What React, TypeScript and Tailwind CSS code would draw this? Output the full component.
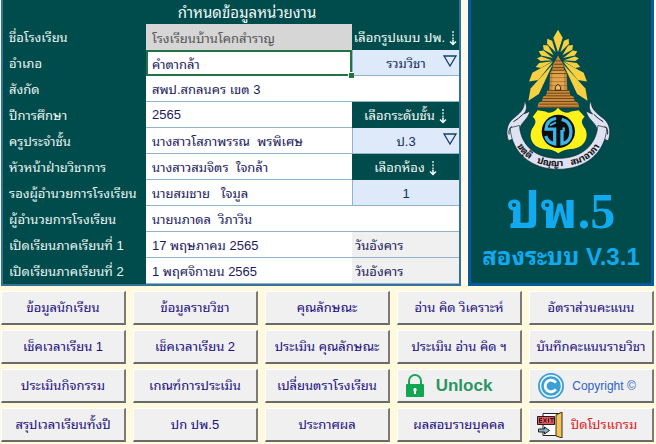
import React from "react";

const LINE = "border-[#8fb4cc]";

function DownArrow() {
  return (
    <svg viewBox="0 0 8 15" className="h-[15px] w-2 shrink-0" fill="none" stroke="currentColor" aria-hidden="true">
      <path d="M4 0v10" strokeWidth="1.3" strokeDasharray="2 1.2" />
      <path d="M4 9v5M1 10.5l3 3 3-3" strokeWidth="1.5" />
    </svg>
  );
}

function Label({ id, children }: { id: string; children: React.ReactNode }) {
  return (
    <label htmlFor={id} className="flex h-[26px] items-center whitespace-nowrap pl-[6px] pt-[2px] text-[#eaf6f4]">
      {children}
    </label>
  );
}

function Field({ id, value, wide }: { id: string; value: string; wide?: boolean }) {
  return (
    <input
      id={id}
      defaultValue={value}
      className={`h-[26px] w-full min-w-0 border-b bg-white px-[6px] text-[#1c1c5c] outline-none ${LINE} ${wide ? "col-span-2" : ""}`}
    />
  );
}

function Picker({ id, value, arrow }: { id: string; value: string; arrow?: boolean }) {
  return (
    <div className={`relative h-[26px] border-b border-l bg-[#deeafa] ${LINE}`}>
      <select
        id={id}
        defaultValue={value}
        className="h-full w-full appearance-none bg-transparent pt-[2px] text-center text-[#12305c] outline-none [text-align-last:center]"
      >
        <option>{value}</option>
      </select>
      {arrow && (
        <svg viewBox="0 0 14 12" className="pointer-events-none absolute right-[2px] top-[5px] h-3 w-[14px]" fill="none" stroke="#12406c" strokeWidth="1.3" aria-hidden="true">
          <path d="M1 1h12L7 11z" />
        </svg>
      )}
    </div>
  );
}

function PickerTitle({ id, children }: { id: string; children: React.ReactNode }) {
  return (
    <label htmlFor={id} className="flex h-[26px] items-center justify-center gap-1 whitespace-nowrap pt-[2px] text-[#f2faf8]">
      {children}
    </label>
  );
}

function Weekday() {
  return <span className={`flex h-[26px] items-center border-b bg-[#f0f0f0] pl-[3px] pt-[2px] text-[#1c1c5c] ${LINE}`}>วันอังคาร</span>;
}

// Left half of the sunburst: tip x, tip y, base x, base y, half width.
const RAYS = [
  [260, 117, 285, 158, 9],
  [247, 136, 279, 167, 9],
  [234, 155, 276, 175, 8],
  [229, 176, 274, 182, 7],
  [225, 202, 275, 185, 8],
  [205, 246, 277, 186, 14],
  [203, 304, 276, 194, 15],
];

function ray([tx, ty, bx, by, w]: number[]) {
  const dx = tx - bx;
  const dy = ty - by;
  const len = Math.hypot(dx, dy);
  const mx = bx + dx * 0.74;
  const my = by + dy * 0.74;
  const nx = (-dy / len) * w;
  const ny = (dx / len) * w;
  return `${tx},${ty} ${mx + nx},${my + ny} ${bx},${by} ${mx - nx},${my - ny}`;
}

function Emblem() {
  const half = RAYS.map((r) => <polygon key={r.join()} points={ray(r)} />);
  return (
    <svg viewBox="136 85 330 430" className="h-[143px] w-[110px]" role="img" aria-label="ตราโรงเรียน">
      <g fill="#f6d042">
        <polygon points="292,90 306,114 292,158 278,114" />
        {half}
        <g transform="translate(584 0) scale(-1 1)">{half}</g>
      </g>
      <path d="M292 168L300 182L308 194L310 210L318 220L320 272H326L329 288L339 292L342 305L352 310L356 324H230L234 310L244 305L247 292L256 288L260 272H266L268 220L275 210L277 194L285 182Z" fill="#c98a3c" />
      <path d="M275 215h35v56h-35z" fill="#e0a64a" />
      <g stroke="#5b3716" strokeWidth="2.5">
        <path d="M284 184h16M277 194h31M275 204h35M274 212h36M268 222h51" />
        <path d="M268 234h52M268 246h52M267 258h53" strokeWidth="1" />
        <path d="M260 273h66M257 281h71M254 289h76M246 297h94M242 306h100M236 314h115M231 323h125" />
      </g>
      <path d="M284 272v-9q8-16 16 0v9z" fill="#f0c060" stroke="#35200e" strokeWidth="3" />
      <g fill="#dfe2f2" stroke="#10282c" strokeWidth="2">
        <path d="M143 424C134 398 138 376 154 360C174 343 192 333 191 303C202 322 197 334 188 344L208 335C201 360 184 366 178 384L174 412Z" />
        <path d="M443 424C452 398 448 376 432 360C412 343 391 333 391 303C382 322 387 334 396 344L376 335C383 360 400 366 408 384L412 412Z" />
        <path d="M148 385C153 462 213 510 293 510S434 462 439 385L412 378C407 437 363 477 293 477S180 437 176 378Z" />
      </g>
      <path d="M145 405q-3-17 9-24M441 405q3-17-9-24M158 367q16-10 28-22M428 367q-16-10-28-22" fill="none" stroke="#10282c" strokeWidth="3" />
      <path id="motto" d="M152 400C169 466 218 501 293 501S419 466 435 400" fill="none" />
      <text fill="#101010" fontSize="28" fontWeight="bold" className="whitespace-pre">
        <textPath href="#motto" startOffset="50%" textAnchor="middle">{"ขตฺติ\u00a0\u00a0 ปญฺญา\u00a0\u00a0 สมาอาภา"}</textPath>
      </text>
      <path d="M292 325C283 338 267 344 254 336L231 332L216 352C230 364 224 375 214 388C200 420 222 449 256 449C273 450 284 455 293 462C302 455 313 450 330 449C364 449 388 420 374 388C364 375 358 364 372 352L354 332L331 336C318 344 301 338 292 325Z" fill="#fff21c" />
      <circle cx="293" cy="396" r="50" fill="#0c0c0c" />
      <g fill="none" stroke="#38b4e6" strokeWidth="10">
        <path d="M286 357Q257 362 256 389H282V433Q261 430 255 410" />
        <path d="M286 369L268 378" strokeWidth="6" />
        <path d="M303 360Q331 366 331 396Q331 428 304 433V392" />
        <path d="M309 384v12" strokeWidth="7" />
      </g>
    </svg>
  );
}

function LockIcon() {
  return (
    <svg viewBox="0 0 18 23" className="h-[23px] w-[18px]" aria-hidden="true">
      <path d="M3 11V7a6 6 0 0 1 12 0v4" fill="none" stroke="#18a75a" strokeWidth="2" />
      <rect y="10" width="18" height="13" rx="1" fill="#12a653" />
      <path d="M9 14a1.8 1.8 0 0 1 1 3.2V20H8v-2.8A1.8 1.8 0 0 1 9 14z" fill="#fff" />
    </svg>
  );
}

function CopyrightIcon() {
  return (
    <svg viewBox="0 0 26 26" className="h-[26px] w-[26px]" fill="none" aria-hidden="true">
      <circle cx="13" cy="13" r="13" fill="#3c9fd6" />
      <circle cx="13" cy="13" r="10.5" stroke="#eef8fd" strokeWidth="1.3" />
      <path d="M17.8 9.8a5.8 5.8 0 1 0 0 6.4" stroke="#fff" strokeWidth="2.8" />
    </svg>
  );
}

function ExitIcon() {
  return (
    <svg viewBox="0 0 26 26" className="h-[26px] w-[26px]" aria-hidden="true">
      <path d="M6 1.500h18v22H6z" fill="#fff" stroke="#222" />
      <path d="M19 3l6-3v26l-6-2z" fill="#f4c45a" stroke="#3a2c16" />
      <path d="M.5 4.500h17v8H.5z" fill="#e0565c" stroke="#2b1c1c" />
      <path d="M5 6.500H2.500v4H5M2.500 8.500H5M6.500 6.500l3 4M9.500 6.500l-3 4M11.500 6.500v4M13 6.500h4M15 6.500v4" stroke="#26191a" fill="none" />
      <path d="M1.500 17h6v-2l5 3.500-5 3.500v-2h-6z" fill="#8eb0c8" stroke="#222" />
    </svg>
  );
}

function Key({ children, className = "text-[#1c0f80]" }: { children: React.ReactNode; className?: string }) {
  return (
    <button
      type="button"
      className={`flex h-[34px] min-w-0 items-center justify-center whitespace-nowrap border-b-2 border-l border-r-2 border-t border-b-[#6c6a68] border-l-white border-r-[#7c7a78] border-t-white bg-[#f0f0f0] ${className}`}
    >
      {children}
    </button>
  );
}

export default function App() {
  return (
    <main className="bg-[#fff9dd] pb-[2px] font-['Liberation_Sans','Noto_Sans_Thai_Looped','Noto_Sans_Thai',sans-serif] text-[13px] leading-[18px]">
      <div className="grid grid-cols-[460fr_186fr] gap-[7px] bg-[#fffbe8] pl-[1px] pr-[2px]">
        <form className="min-w-0 border-2 border-t-0 border-[#33739a] bg-[#004b4b]">
          <h1 className="flex h-6 items-center justify-center pl-8 pt-[2px] text-[15px] text-[#f2faf8]">กำหนดข้อมูลหน่วยงาน</h1>
          <div className="grid grid-cols-[143fr_206fr_107fr]">
            <Label id="school">ชื่อโรงเรียน</Label>
            <input id="school" readOnly value="โรงเรียนบ้านโคกสำราญ" className="h-[26px] w-full min-w-0 bg-[#d6d6d6] px-[6px] text-[#555] outline-none" />
            <PickerTitle id="format">
              <span>เลือกรูปแบบ ปพ.</span>
              <DownArrow />
            </PickerTitle>

            <Label id="district">อำเภอ</Label>
            <div className="relative h-[26px]">
              <input id="district" defaultValue="คำตากล้า" className="h-full w-full border-2 border-[#217346] bg-white px-1 text-[#1c1c5c] outline-none" />
              <span className="absolute -bottom-[2px] -right-[2px] z-10 h-[6px] w-[6px] border-l border-t border-white bg-[#217346]" />
            </div>
            <Picker id="format" value="รวมวิชา" arrow />

            <Label id="area">สังกัด</Label>
            <Field id="area" value="สพป.สกลนคร เขต 3" wide />

            <Label id="year">ปีการศึกษา</Label>
            <Field id="year" value="2565" />
            <PickerTitle id="grade">
              <span>เลือกระดับชั้น</span>
              <DownArrow />
            </PickerTitle>

            <Label id="teacher">ครูประจำชั้น</Label>
            <Field id="teacher" value="นางสาวโสภาพรรณ  พรพิเศษ" />
            <Picker id="grade" value="ป.3" arrow />

            <Label id="academic">หัวหน้าฝ่ายวิชาการ</Label>
            <Field id="academic" value="นางสาวสมจิตร  ใจกล้า" />
            <PickerTitle id="room">
              <span>เลือกห้อง</span>
              <DownArrow />
            </PickerTitle>

            <Label id="deputy">รองผู้อำนวยการโรงเรียน</Label>
            <Field id="deputy" value="นายสมชาย   ใจมูล" />
            <Picker id="room" value="1" />

            <Label id="director">ผู้อำนวยการโรงเรียน</Label>
            <Field id="director" value="นายนภาดล  วิภาวิน" wide />

            <Label id="term1">เปิดเรียนภาคเรียนที่ 1</Label>
            <Field id="term1" value="17 พฤษภาคม 2565" />
            <Weekday />

            <Label id="term2">เปิดเรียนภาคเรียนที่ 2</Label>
            <Field id="term2" value="1 พฤศจิกายน 2565" />
            <Weekday />
          </div>
        </form>

        <section className="flex min-w-0 flex-col items-center whitespace-nowrap border-[3px] border-t-0 border-[#075a9c] bg-[#004b4b] pt-7 font-bold text-[#10aaf0]">
          <Emblem />
          <p className="mt-3 font-['Liberation_Serif','Noto_Sans_Thai_Looped','Noto_Sans_Thai',serif] text-[50px] leading-[56px]">ปพ.5</p>
          <p className="mt-[2px] text-[24px] leading-[32px]">สองระบบ V.3.1</p>
        </section>
      </div>

      <nav className="grid grid-cols-5 gap-x-[7px] gap-y-[5px] pl-[1px] pr-[2px] pt-[5px]">
        <Key>ข้อมูลนักเรียน</Key>
        <Key>ข้อมูลรายวิชา</Key>
        <Key>คุณลักษณะ</Key>
        <Key>อ่าน คิด วิเคราะห์</Key>
        <Key>อัตราส่วนคะแนน</Key>
        <Key>เช็คเวลาเรียน 1</Key>
        <Key>เช็คเวลาเรียน 2</Key>
        <Key>ประเมิน คุณลักษณะ</Key>
        <Key>ประเมิน อ่าน คิด ฯ</Key>
        <Key>บันทึกคะแนนรายวิชา</Key>
        <Key>ประเมินกิจกรรม</Key>
        <Key>เกณฑ์การประเมิน</Key>
        <Key>เปลี่ยนตราโรงเรียน</Key>
        <Key className="gap-3 pr-5 text-[17px] font-bold text-[#2b9563]">
          <LockIcon />
          Unlock
        </Key>
        <Key className="gap-2 pr-2 text-[12px] text-[#2d62c8]">
          <CopyrightIcon />
          Copyright ©
        </Key>
        <Key>สรุปเวลาเรียนทั้งปี</Key>
        <Key>ปก ปพ.5</Key>
        <Key>ประกาศผล</Key>
        <Key>ผลสอบรายบุคคล</Key>
        <Key className="gap-2 pr-2 text-[#e01822]">
          <ExitIcon />
          ปิดโปรแกรม
        </Key>
      </nav>
    </main>
  );
}
